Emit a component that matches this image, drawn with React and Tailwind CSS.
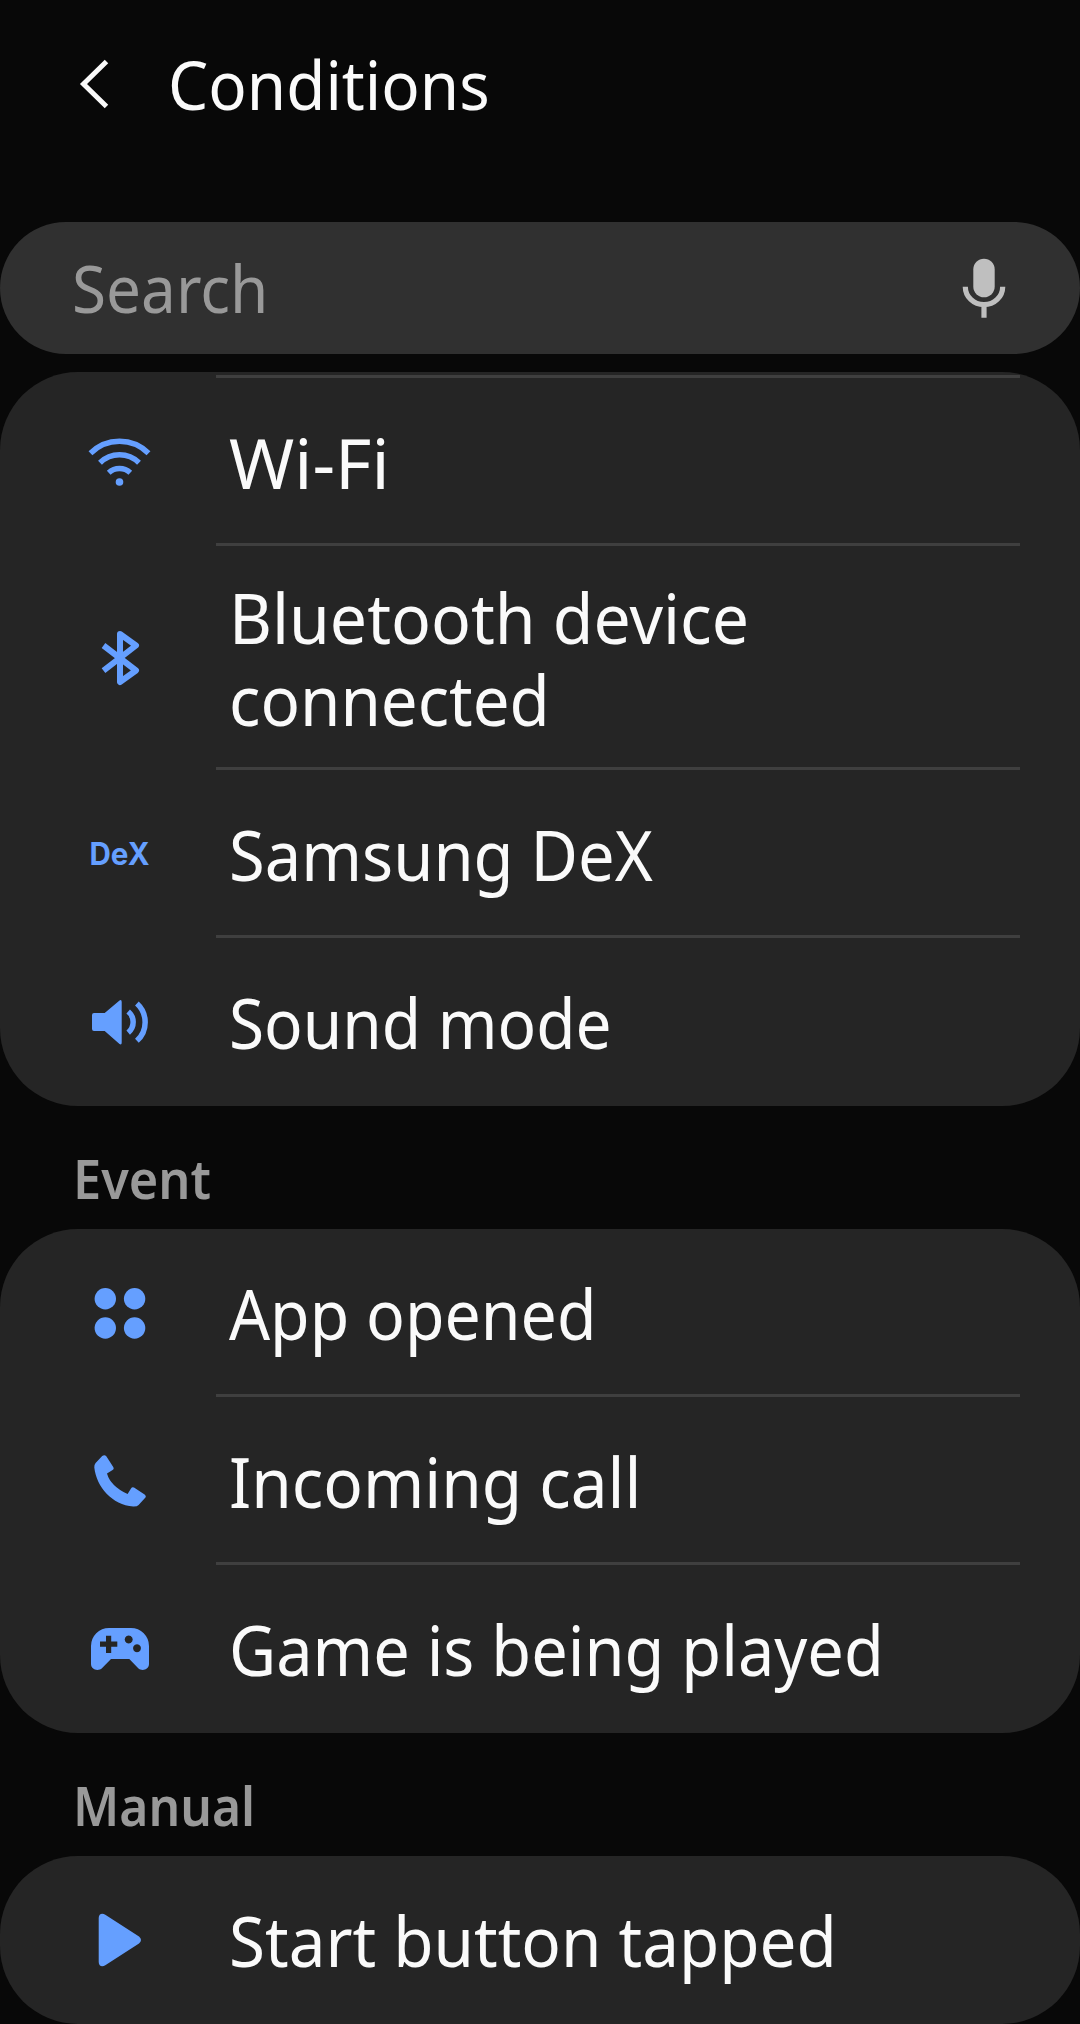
import React from 'react';

const WifiIcon = () => (
  <svg viewBox="0 0 64 64" className="w-16 h-16" fill="none" stroke="currentColor" strokeWidth="5.5">
    <path d="M2.5 23.3A41 41 0 0 1 60.5 23.3" />
    <path d="M12 32.8A27.8 27.8 0 0 1 51 32.8" />
    <path d="M20.7 42.7A16 16 0 0 1 42.3 42.7" />
    <circle cx="31.5" cy="52" r="3.8" fill="currentColor" stroke="none" />
  </svg>
);

const BluetoothIcon = () => (
  <svg viewBox="0 0 64 64" className="w-16 h-16" fill="none" stroke="currentColor" strokeWidth="6" strokeLinejoin="round">
    <path d="M15.5 19.5L48 44.5L32 56V8L48 19.5L15.5 44.7" />
  </svg>
);

const DexIcon = () => (
  <svg viewBox="0 0 64 64" className="w-16 h-16" fill="currentColor">
    <text x="1.5" y="43" textLength="60" lengthAdjust="spacingAndGlyphs" className="font-['Inter'] text-[31px] font-bold">
      DeX
    </text>
  </svg>
);

const SoundIcon = () => (
  <svg viewBox="0 0 64 64" className="w-16 h-16" fill="currentColor">
    <path d="M6 23H16.7L31.5 10.4Q33.7 9.2 33.7 12V52.6Q33.7 55.4 31.5 54L16.7 41H6Q4 41 4 39V25Q4 23 6 23Z" />
    <path d="M40.2 21.5A13.8 13.8 0 0 1 40.2 42.7M48.9 13.5A25.2 25.2 0 0 1 48.9 50.8" fill="none" stroke="currentColor" strokeWidth="5.5" />
  </svg>
);

const AppsIcon = () => (
  <svg viewBox="0 1 64 64" className="w-16 h-16" fill="currentColor">
    <circle cx="17.3" cy="18.7" r="10.7" />
    <circle cx="46.6" cy="18.7" r="10.7" />
    <circle cx="17.3" cy="48" r="10.7" />
    <circle cx="46.6" cy="48" r="10.7" />
  </svg>
);

const PhoneIcon = () => (
  <svg viewBox="0 1 64 64" className="w-16 h-16" fill="currentColor">
    <path d="M14.2 8Q16.5 6.2 18.3 8.2L25.4 19.2Q26.4 21 24.6 22.1L19 25.4Q22.5 38 39.6 46L43 40.4Q44.2 38.6 46 39.6L56.6 46.4Q58.8 48.2 57 50L50.6 57Q49.2 58.7 45.3 58.6C24 56.5 8.6 39.5 6.3 19.5Q6.1 16.6 7.6 15Z" />
  </svg>
);

const GamepadIcon = () => (
  <svg viewBox="0 1 64 64" className="w-16 h-16" fill="currentColor">
    <path
      fillRule="evenodd"
      d="M21 12H43A18 18 0 0 1 61 30V48C61 53.5 54 56 50 52L41.3 43H23L14.2 52C10 56 3 53.5 3 48V30A18 18 0 0 1 21 12ZM18 19.7V25.6H12V30.8H18V37H23.2V30.8H29.3V25.6H23.2V19.7ZM40.7 19.4a4 4 0 1 0 .01 0ZM49 28.2a4 4 0 1 0 .01 0Z"
    />
  </svg>
);

const PlayIcon = () => (
  <svg viewBox="0 0 64 64" className="w-16 h-16" fill="currentColor">
    <path d="M10.7 10C10.7 6 14 4.6 17.3 6.8L51 28.5Q55 32 51 35.5L17.3 57.2C14 59.4 10.7 58 10.7 54Z" />
  </svg>
);

const MicIcon = () => (
  <svg viewBox="0 0 60 60" className="w-[60px] h-[60px] text-[#bfbfbf]" fill="none" stroke="currentColor" strokeWidth="5.2">
    <rect x="19.3" y="0.7" width="21.4" height="38.6" rx="10.7" fill="currentColor" stroke="none" />
    <path d="M11.3 28.7A18.7 18 0 0 0 48.7 28.7M30 46V59.7" />
  </svg>
);

const Row = ({ icon: Icon, lines, height = 'h-[168px]', divider = true }) => (
  <div className={`relative flex items-center ${height} pl-[88px]`}>
    <span className="shrink-0 text-[#659fff]">
      <Icon />
    </span>
    <div className="ml-[77px] whitespace-nowrap text-[69.5px] leading-[82px] text-[#fafafa]">
      {lines.map(({ text, scale }) => (
        <div key={text} className={`origin-left ${scale}`}>{text}</div>
      ))}
    </div>
    {divider && <span className="absolute bottom-0 left-[216px] right-[60px] h-[3px] bg-[#3f3f3f]" />}
  </div>
);

const SectionTitle = ({ children, scale }) => (
  <div className="pl-[73px]">
    <h2 className={`h-[123px] origin-left pt-[42px] text-[54px] leading-[60px] font-semibold text-[#999999] ${scale}`}>
      {children}
    </h2>
  </div>
);

const stateRows = [
  { icon: WifiIcon, lines: [{ text: 'Wi-Fi', scale: 'scale-x-[1.01]' }] },
  {
    icon: BluetoothIcon,
    height: 'h-[224px]',
    lines: [
      { text: 'Bluetooth device', scale: 'scale-x-[0.951]' },
      { text: 'connected', scale: 'scale-x-[0.941]' }
    ]
  },
  { icon: DexIcon, lines: [{ text: 'Samsung DeX', scale: 'scale-x-[0.936]' }] },
  { icon: SoundIcon, lines: [{ text: 'Sound mode', scale: 'scale-x-[0.92]' }], divider: false }
];

const eventRows = [
  { icon: AppsIcon, lines: [{ text: 'App opened', scale: 'scale-x-[0.926]' }] },
  { icon: PhoneIcon, lines: [{ text: 'Incoming call', scale: 'scale-x-[0.944]' }] },
  { icon: GamepadIcon, lines: [{ text: 'Game is being played', scale: 'scale-x-[0.933]' }], divider: false }
];

const manualRows = [
  { icon: PlayIcon, lines: [{ text: 'Start button tapped', scale: 'scale-x-[0.943]' }], divider: false }
];

const App = () => {
  return (
    <div className="w-[1080px] h-[2024px] overflow-hidden bg-[#080808] font-['Noto_Sans',sans-serif]">
      <header className="flex h-[222px] items-start pl-[78px] pt-[43px]">
        <svg viewBox="0 0 32 56" className="mt-[13px] h-14 w-8" fill="none" stroke="#fafafa" strokeWidth="5">
          <path d="M28.5 5.5L5.5 28L28.5 50.5" />
        </svg>
        <h1 className="ml-[58px] origin-left scale-x-[0.937] text-[68px] leading-[82px] text-[#fafafa]">Conditions</h1>
      </header>

      <div className="flex h-[132px] items-center justify-between rounded-full bg-[#303030] pl-[72px] pr-[66px]">
        <span className="origin-left scale-x-[0.955] text-[65px] leading-[78px] text-[#999999]">Search</span>
        <MicIcon />
      </div>

      <section className="mt-[18px] overflow-hidden rounded-[78px] bg-[#252525] pt-[3px]">
        <div className="ml-[216px] mr-[60px] h-[3px] bg-[#3f3f3f]" />
        {stateRows.map((row) => <Row key={row.lines[0].text} {...row} />)}
      </section>

      <SectionTitle scale="scale-x-[0.935]">Event</SectionTitle>
      <section className="rounded-[78px] bg-[#252525]">
        {eventRows.map((row) => <Row key={row.lines[0].text} {...row} />)}
      </section>

      <SectionTitle scale="scale-x-[0.922]">Manual</SectionTitle>
      <section className="rounded-[78px] bg-[#252525]">
        {manualRows.map((row) => <Row key={row.lines[0].text} {...row} />)}
      </section>
    </div>
  );
};

export default App;
